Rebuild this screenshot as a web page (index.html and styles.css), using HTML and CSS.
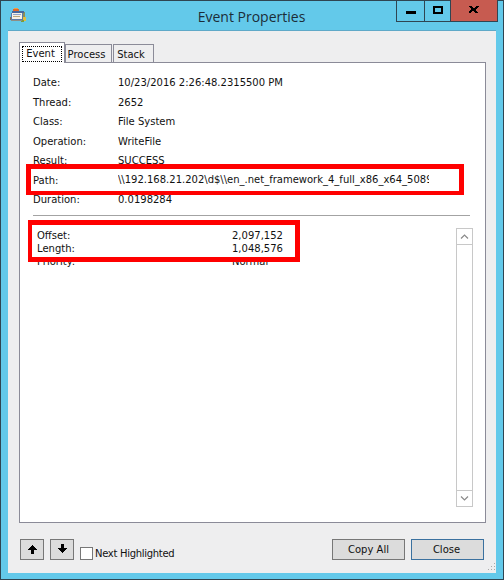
FILE: index.html
```html
<!DOCTYPE html>
<html lang="en">
<head>
<meta charset="utf-8">
<title>Event Properties</title>
<link rel="stylesheet" href="styles.css">
</head>
<body>
<div class="window">
  <header class="titlebar">
    <svg class="app-icon" width="17" height="15" viewBox="0 0 17 15" shape-rendering="crispEdges" aria-hidden="true">
      <rect x="4" y="0" width="4" height="1" fill="#f0a040"/>
      <rect x="3" y="1" width="6" height="3" fill="#e0682c"/>
      <rect x="12" y="4" width="3" height="7" fill="#8d8f58"/>
      <rect x="13" y="9" width="3" height="4" fill="#e0c040"/>
      <rect x="11" y="12" width="3" height="2" fill="#7d9a3a"/>
      <rect x="2" y="3" width="12" height="2" fill="#46689c"/>
      <rect x="1" y="5" width="12" height="7" fill="#5b7aa8"/>
      <rect x="2" y="5" width="10" height="6" fill="#f4f1e6"/>
      <rect x="3" y="6" width="8" height="1" fill="#8fa6cc"/>
      <rect x="3" y="8" width="7" height="1" fill="#b9a77c"/>
      <rect x="0" y="9" width="1" height="3" fill="#8a6f4a"/>
      <rect x="1" y="12" width="11" height="1" fill="#8e8e86"/>
    </svg>
    <h1 class="title">Event Properties</h1>
    <div class="controls">
      <div class="control control-min"><span class="glyph-min"></span></div>
      <div class="control control-max"><span class="glyph-max"></span></div>
      <div class="control control-close">
        <svg width="10" height="8" viewBox="0 0 10 8" shape-rendering="crispEdges" aria-hidden="true">
          <path d="M0 0h3v1h1v1h2v-1h1v-1h3v1h-1v1h-1v1h-1v2h1v1h1v1h-3v-1h-1v-1h-2v1h-1v1h-3v-1h1v-1h1v-1h1v-2h-1v-1h-1z" fill="#000"/>
        </svg>
      </div>
    </div>
  </header>

  <main class="client">
    <nav class="tabs">
      <div class="tab tab-active"><span class="tab-focus">Event</span></div>
      <div class="tab tab-process">Process</div>
      <div class="tab tab-stack">Stack</div>
    </nav>

    <section class="panel">
      <dl class="fields">
        <dt>Date:</dt><dd>10/23/2016 2:26:48.2315500 PM</dd>
        <dt>Thread:</dt><dd>2652</dd>
        <dt>Class:</dt><dd>File System</dd>
        <dt>Operation:</dt><dd>WriteFile</dd>
        <dt>Result:</dt><dd>SUCCESS</dd>
        <dt>Path:</dt><dd class="clip">\\192.168.21.202\d$\\en_.net_framework_4_full_x86_x64_5089</dd>
        <dt>Duration:</dt><dd>0.0198284</dd>
      </dl>
      <hr class="divider">
      <div class="details">
        <div class="detail-list">
          <div class="detail"><span class="detail-name">Offset:</span><span>2,097,152</span></div>
          <div class="detail"><span class="detail-name">Length:</span><span>1,048,576</span></div>
          <div class="detail"><span class="detail-name">Priority:</span><span>Normal</span></div>
        </div>
        <div class="scrollbar">
          <div class="scroll-btn">
            <svg width="9" height="5" viewBox="0 0 9 5" aria-hidden="true"><path d="M1 4.5L4.5 1L8 4.5" fill="none" stroke="#8a8a8a" stroke-width="1.2"/></svg>
          </div>
          <div class="scroll-btn">
            <svg width="9" height="5" viewBox="0 0 9 5" aria-hidden="true"><path d="M1 .5L4.5 4L8 .5" fill="none" stroke="#8a8a8a" stroke-width="1.2"/></svg>
          </div>
        </div>
      </div>
      <div class="mark mark-path"></div>
      <div class="mark mark-offset"></div>
    </section>

    <footer class="footer">
      <button class="btn btn-arrow" type="button" aria-label="Previous">
        <svg width="9" height="9" viewBox="0 0 9 9" shape-rendering="crispEdges" aria-hidden="true"><path d="M4 0h1v1h1v1h1v1h1v1h1v1h-3v4h-3v-4h-3v-1h1v-1h1v-1h1v-1h1z" fill="#000"/></svg>
      </button>
      <button class="btn btn-arrow btn-arrow-down" type="button" aria-label="Next">
        <svg width="9" height="9" viewBox="0 0 9 9" shape-rendering="crispEdges" aria-hidden="true"><path d="M3 0h3v4h3v1h-1v1h-1v1h-1v1h-1v1h-1v-1h-1v-1h-1v-1h-1v-1h-1v-1h3z" fill="#000"/></svg>
      </button>
      <label class="check"><span class="check-box"></span><span class="check-label">Next Highlighted</span></label>
      <div class="spacer"></div>
      <button class="btn btn-text" type="button">Copy All</button>
      <button class="btn btn-text btn-default" type="button">Close</button>
      <svg class="grip" width="10" height="10" viewBox="0 0 10 10" shape-rendering="crispEdges" aria-hidden="true">
        <path d="M8 0h1v1h-1zM8 3h1v1h-1zM5 3h1v1h-1zM8 6h1v1h-1zM5 6h1v1h-1zM2 6h1v1h-1z" fill="#a8a8a8"/>
      </svg>
    </footer>
  </main>
</div>
</body>
</html>
```

FILE: styles.css
```css
* { box-sizing: border-box; }
html, body { margin: 0; padding: 0; }
body {
  width: 504px;
  height: 580px;
  overflow: hidden;
  font-family: "DejaVu Sans", Verdana, sans-serif;
  font-size: 10px;
  color: #111;
}
.window {
  display: flex;
  flex-direction: column;
  width: 504px;
  height: 580px;
  padding: 0 7px 6px;
  border: 1px solid #2f4552;
  background: #63c9ea;
}
.titlebar {
  position: relative;
  display: flex;
  align-items: center;
  justify-content: center;
  flex: none;
  height: 30px;
}
.app-icon { position: absolute; left: 2px; top: 7px; }
.title {
  margin: 0 0 0 -1px;
  padding-top: 1px;
  font-family: "Open Sans", sans-serif;
  font-size: 14px;
  font-weight: 400;
  color: #1c2d38;
}
.controls {
  position: absolute;
  top: -1px;
  right: -2px;
  display: flex;
  height: 22px;
  border: 1px solid #2f4552;
  border-top: 0;
}
.control {
  display: flex;
  align-items: center;
  justify-content: center;
  height: 100%;
}
.control-min { width: 28px; border-right: 1px solid #2f4552; }
.control-max { width: 26px; border-right: 1px solid #2f4552; }
.control-close { width: 46px; background: #c75b50; padding-bottom: 1px; }
.glyph-min { width: 10px; height: 3px; margin-top: 3px; background: #000; }
.glyph-max { width: 10px; height: 8px; margin-bottom: 2px; border: 2px solid #000; }
.client {
  display: flex;
  flex: 1;
  flex-direction: column;
  min-height: 0;
  padding: 11px 11px 0;
  background: #eeeeef;
  box-shadow: 0 -1px 0 #5fa9c8;
}
.tabs {
  position: relative;
  z-index: 1;
  display: flex;
  align-items: flex-end;
  flex: none;
  height: 21px;
  margin-bottom: -1px;
}
.tab {
  display: flex;
  align-items: center;
  justify-content: center;
  height: 18px;
  margin-bottom: 1px;
  border: 1px solid #8b8b98;
  border-bottom: 0;
  background: #eeeeef;
}
.tab-process { width: 47px; margin-right: 1px; padding: 2px 4px 0 0; }
.tab-stack { width: 41px; padding: 2px 5px 0 0; }
.tab-active {
  width: 46px;
  height: 21px;
  margin-bottom: 0;
  padding: 3px 2px 1px;
  background: #fff;
}
.tab-focus {
  display: flex;
  align-items: center;
  justify-content: center;
  width: 100%;
  height: 100%;
  padding: 0 3px 2px 0;
  outline: 1px dotted #000;
  outline-offset: -1px;
}
.panel {
  position: relative;
  display: flex;
  flex: none;
  flex-direction: column;
  width: 467px;
  height: 461px;
  padding: 10px 15px 15px 13px;
  border: 1px solid #8b8b98;
  background: #fff;
}
.fields {
  display: grid;
  grid-template-columns: 85px 1fr;
  grid-auto-rows: 19.5px;
  align-items: center;
  flex: none;
  margin: 0;
}
.fields dt, .fields dd { margin: 0; white-space: nowrap; }
.clip { width: 311px; height: 16px; line-height: 16px; overflow: hidden; }
.divider {
  flex: none;
  width: 100%;
  height: 1px;
  margin: 5px 0 0;
  border: 0;
  background: #a3a3a3;
}
.details {
  display: flex;
  flex: 1;
  min-height: 0;
  justify-content: space-between;
  padding-top: 12px;
}
.detail-list { padding: 1px 0 0 4px; }
.detail {
  display: flex;
  align-items: center;
  height: 13px;
}
.detail-name { width: 195px; }
.scrollbar {
  display: flex;
  flex-direction: column;
  justify-content: space-between;
  flex: none;
  width: 17px;
  margin-right: -3px;
  border: 1px solid #c8c8c8;
}
.scroll-btn {
  display: flex;
  align-items: center;
  justify-content: center;
  height: 16px;
}
.scroll-btn:first-child { border-bottom: 1px solid #c8c8c8; }
.scroll-btn:last-child { border-top: 1px solid #c8c8c8; }
.mark {
  position: absolute;
  border-style: solid;
  border-color: #f00;
  pointer-events: none;
}
.mark-path {
  left: 6px;
  top: 101px;
  width: 438px;
  height: 31px;
  border-width: 5px;
  border-bottom-width: 4px;
}
.mark-offset {
  left: 8px;
  top: 157px;
  width: 272px;
  height: 42px;
  border-width: 5px 5px 5px 4px;
}
.footer {
  position: relative;
  display: flex;
  align-items: flex-start;
  flex: 1;
  padding: 16px 1px 0 1px;
}
.btn {
  display: flex;
  align-items: center;
  justify-content: center;
  height: 21px;
  padding: 0;
  border: 1px solid #777;
  border-radius: 0;
  background: #dcdcdc;
  font: inherit;
  color: #111;
}
.btn-arrow { width: 24px; margin-right: 6px; padding-bottom: 1px; }
.btn-arrow-down { padding-bottom: 2px; }
.btn-text { width: 73px; margin-left: 6px; }
.btn-default { border-color: #3b719f; padding-right: 2px; }
.check {
  display: flex;
  align-items: center;
  margin-top: 8px;
  height: 13px;
  white-space: nowrap;
}
.check-box {
  width: 13px;
  height: 13px;
  margin-right: 2px;
  border: 1px solid #777;
  background: #fff;
}
.check-label { letter-spacing: -0.3px; }
.spacer { flex: 1; }
.grip { position: absolute; right: -11px; bottom: 0; }
```
